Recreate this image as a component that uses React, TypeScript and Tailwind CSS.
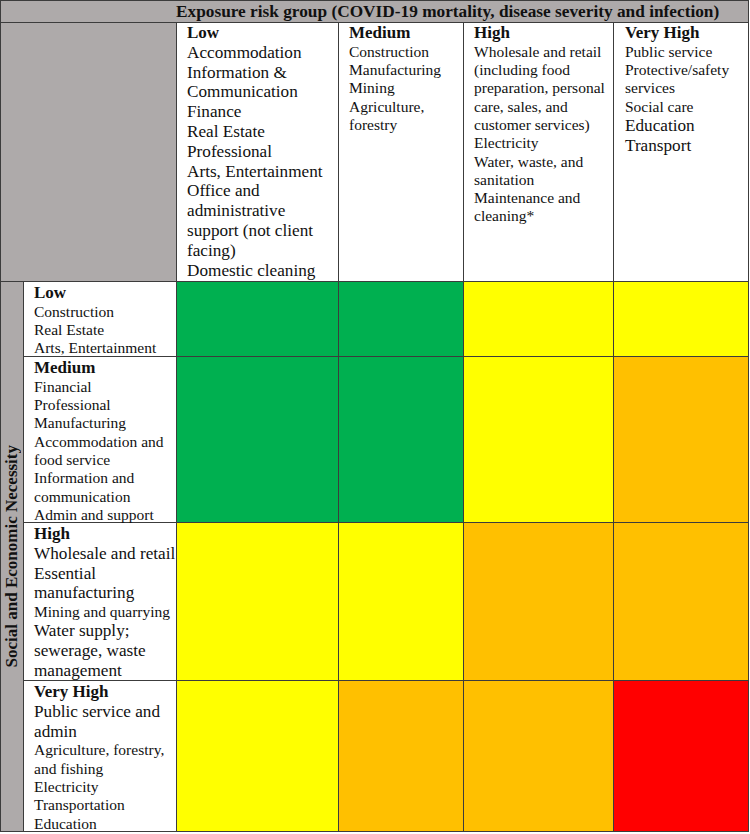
import React from "react";

type Line = { t: string; big?: boolean; bold?: boolean };

const L = (t: string): Line => ({ t });
const B = (t: string): Line => ({ t, big: true });
const H = (t: string): Line => ({ t, bold: true });

function Lines({ lines }: { lines: Line[] }) {
  return (
    <>
      {lines.map((l, i) =>
        l.bold ? (
          <div key={i} className="whitespace-nowrap font-bold text-[17px] leading-[19.8px]">
            {l.t}
          </div>
        ) : l.big ? (
          <div key={i} className="whitespace-nowrap text-[17.2px] leading-[19.8px]">
            {l.t}
          </div>
        ) : (
          <div key={i} className="whitespace-nowrap text-[15.5px] leading-[18.3px]">
            {l.t}
          </div>
        )
      )}
    </>
  );
}

const colHeaders: Line[][] = [
  [
    H("Low"),
    B("Accommodation"),
    B("Information &"),
    B("Communication"),
    B("Finance"),
    B("Real Estate"),
    B("Professional"),
    B("Arts, Entertainment"),
    B("Office and"),
    B("administrative"),
    B("support (not client"),
    B("facing)"),
    B("Domestic cleaning"),
  ],
  [H("Medium"), L("Construction"), L("Manufacturing"), L("Mining"), L("Agriculture,"), L("forestry")],
  [
    H("High"),
    L("Wholesale and retail"),
    L("(including food"),
    L("preparation, personal"),
    L("care, sales, and"),
    L("customer services)"),
    L("Electricity"),
    L("Water, waste, and"),
    L("sanitation"),
    L("Maintenance and"),
    L("cleaning*"),
  ],
  [
    H("Very High"),
    L("Public service"),
    L("Protective/safety"),
    L("services"),
    L("Social care"),
    B("Education"),
    B("Transport"),
  ],
];

const G = "bg-[#00B050]";
const Y = "bg-[#FFFF00]";
const O = "bg-[#FFC000]";
const R = "bg-[#FF0000]";

const rows: { head: Line[]; cells: string[] }[] = [
  {
    head: [H("Low"), L("Construction"), L("Real Estate"), L("Arts, Entertainment")],
    cells: [G, G, Y, Y],
  },
  {
    head: [
      H("Medium"),
      L("Financial"),
      L("Professional"),
      L("Manufacturing"),
      L("Accommodation and"),
      L("food service"),
      L("Information and"),
      L("communication"),
      L("Admin and support"),
    ],
    cells: [G, G, Y, O],
  },
  {
    head: [
      H("High"),
      B("Wholesale and retail"),
      B("Essential"),
      B("manufacturing"),
      L("Mining and quarrying"),
      B("Water supply;"),
      B("sewerage, waste"),
      B("management"),
    ],
    cells: [Y, Y, O, O],
  },
  {
    head: [
      H("Very High"),
      B("Public service and"),
      B("admin"),
      L("Agriculture, forestry,"),
      L("and fishing"),
      L("Electricity"),
      L("Transportation"),
      L("Education"),
    ],
    cells: [Y, O, O, R],
  },
];

export default function App() {
  return (
    <div className="w-[750px] h-[834px] bg-white font-['Liberation_Serif',serif] text-[#111]">
      <div className="grid w-[749px] grid-cols-[22px_152px_161px_124px_149px_134px] grid-rows-[21px_258px_74px_165px_157px_150px] gap-px bg-[#3c3c3c] p-px">
        {/* top title row */}
        <div className="col-span-6 bg-[#AEAAAA] pl-[175px] flex items-center">
          <div className="whitespace-nowrap font-bold text-[17.3px] leading-[21px]">
            Exposure risk group (COVID-19 mortality, disease severity and infection)
          </div>
        </div>

        {/* column header row */}
        <div className="col-span-2 bg-[#AEAAAA]" />
        {colHeaders.map((c, i) => (
          <div key={i} className={`bg-white ${i === 3 ? "pl-[11px]" : "pl-[10px]"}`}>
            <Lines lines={c} />
          </div>
        ))}

        {/* rotated label */}
        <div className="row-span-4 row-start-3 col-start-1 bg-[#AEAAAA] flex items-center justify-center">
          <div className="[writing-mode:vertical-rl] rotate-180 whitespace-nowrap font-bold text-[17px] leading-[20px]">
            Social and Economic Necessity
          </div>
        </div>

        {rows.map((r, ri) => (
          <React.Fragment key={ri}>
            <div className="col-start-2 bg-white pl-[10px] pt-px">
              <Lines lines={r.head} />
            </div>
            {r.cells.map((c, ci) => (
              <div key={ci} className={c} />
            ))}
          </React.Fragment>
        ))}
      </div>
    </div>
  );
}
